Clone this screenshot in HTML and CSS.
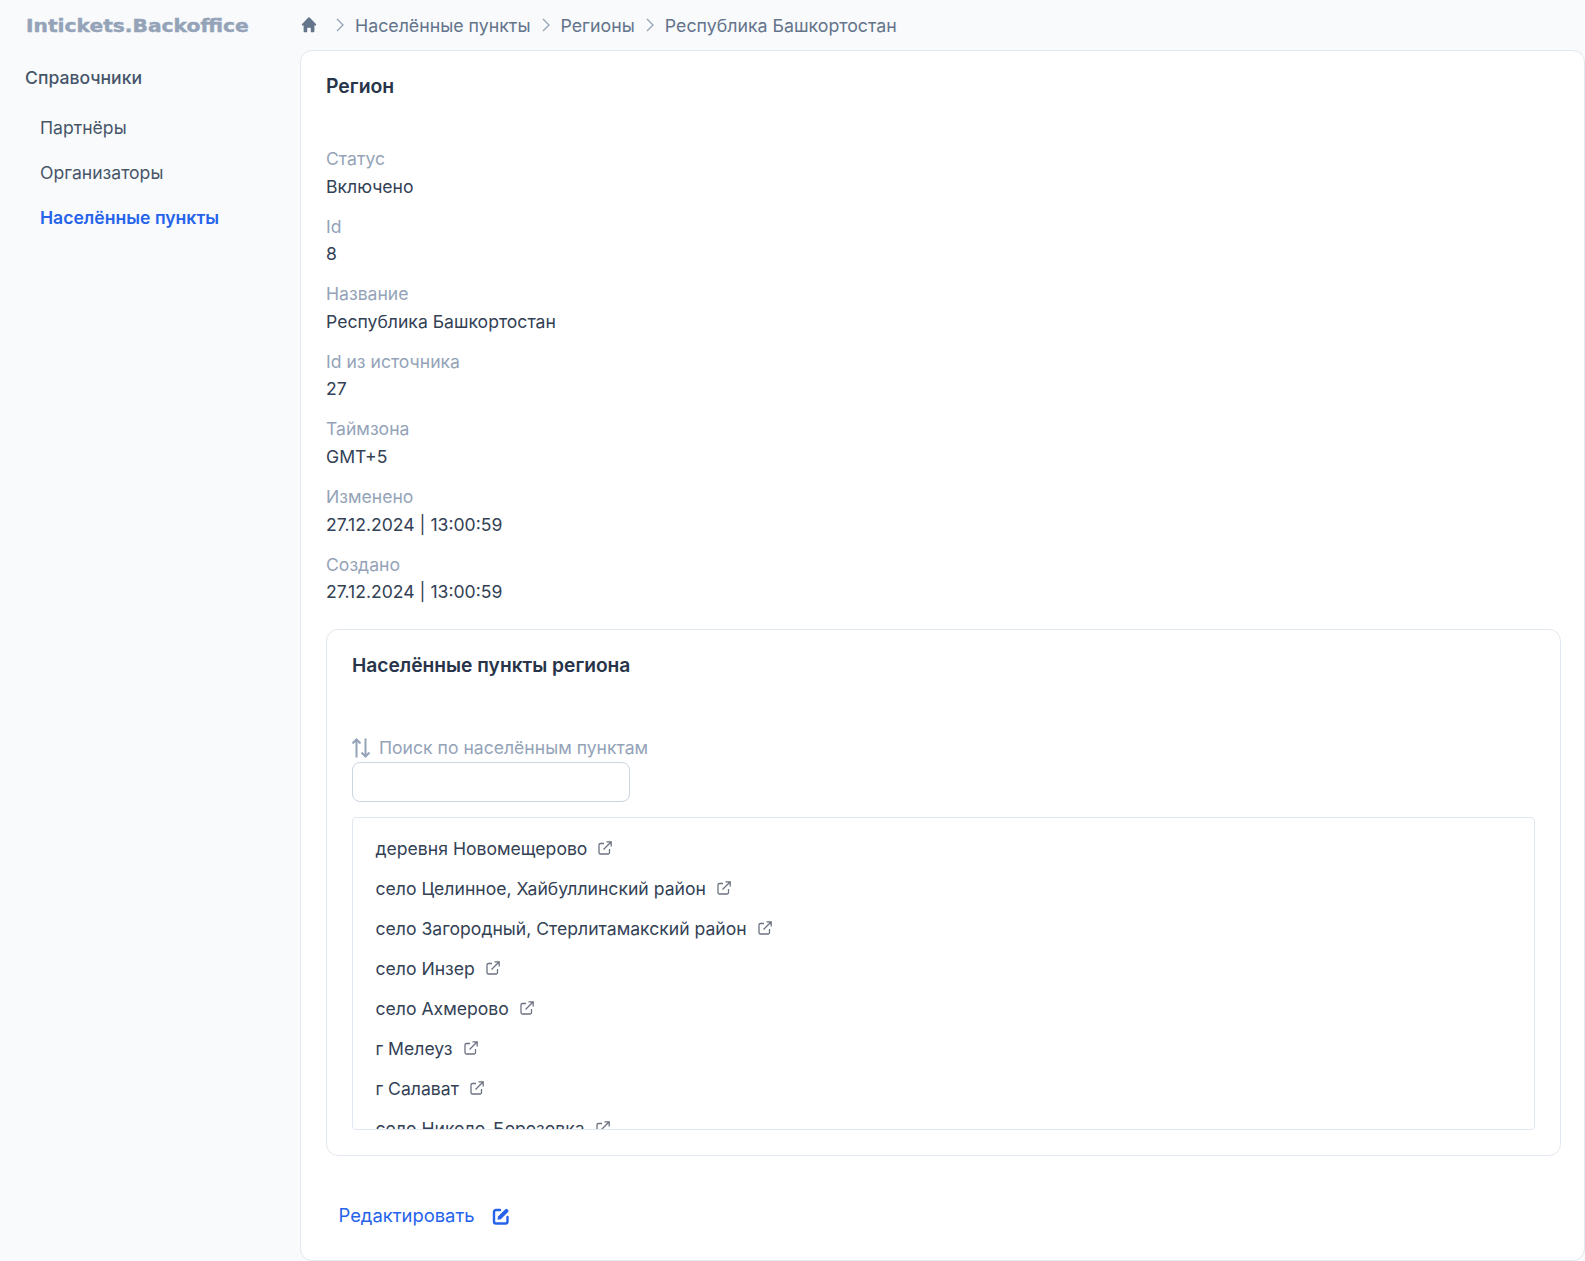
FILE: index.html
```html
<!DOCTYPE html>
<html lang="en">
<head>
    <meta charset="UTF-8">
    <title>Intickets.Backoffice</title>
    <link rel="stylesheet" href="styles.css">
</head>
<body>
    <div class="layout">
        <aside class="sidebar">
            <div class="logo">Intickets.Backoffice</div>
            <div class="nav-title">Справочники</div>
            <nav class="nav">
                <a class="nav-link">Партнёры</a>
                <a class="nav-link">Организаторы</a>
                <a class="nav-link active">Населённые пункты</a>
            </nav>
        </aside>
        <div class="main">
            <div class="breadcrumbs">
                <svg class="home-icon" viewBox="0 0 20 20" fill="currentColor"><path d="M9.3 1.8a1 1 0 0 1 1.4 0l7 7a1 1 0 0 1-.7 1.7h-1v6.5a1 1 0 0 1-1 1h-2.5a.5.5 0 0 1-.5-.5v-4a.5.5 0 0 0-.5-.5h-3a.5.5 0 0 0-.5.5v4a.5.5 0 0 1-.5.5H5a1 1 0 0 1-1-1v-6.5H3a1 1 0 0 1-.7-1.7z"/></svg>
                <svg class="crumb-sep" viewBox="0 0 10 16" fill="none" stroke="currentColor" stroke-width="1.3"><path d="M2 2l6 6-6 6"/></svg>
                <a class="crumb">Населённые пункты</a>
                <svg class="crumb-sep" viewBox="0 0 10 16" fill="none" stroke="currentColor" stroke-width="1.3"><path d="M2 2l6 6-6 6"/></svg>
                <a class="crumb">Регионы</a>
                <svg class="crumb-sep" viewBox="0 0 10 16" fill="none" stroke="currentColor" stroke-width="1.3"><path d="M2 2l6 6-6 6"/></svg>
                <a class="crumb">Республика Башкортостан</a>
            </div>
            <div class="card">
                <h2 class="card-title">Регион</h2>
                <dl class="fields">
                    <div class="field"><dt>Статус</dt><dd>Включено</dd></div>
                    <div class="field"><dt>Id</dt><dd>8</dd></div>
                    <div class="field"><dt>Название</dt><dd>Республика Башкортостан</dd></div>
                    <div class="field"><dt>Id из источника</dt><dd>27</dd></div>
                    <div class="field"><dt>Таймзона</dt><dd>GMT+5</dd></div>
                    <div class="field"><dt>Изменено</dt><dd>27.12.2024 | 13:00:59</dd></div>
                    <div class="field"><dt>Создано</dt><dd>27.12.2024 | 13:00:59</dd></div>
                </dl>
                <section class="panel">
                    <h3 class="panel-title">Населённые пункты региона</h3>
                    <label class="search-label">
                        <svg class="sort-icon" viewBox="0 0 20 20" fill="none" stroke="currentColor" stroke-width="2"><path d="M5.500 19.500V1.500M1.500 5.500l4-4 4 4M14.500 .5v18M10.500 14.500l4 4 4-4"/></svg>
                        Поиск по населённым пунктам
                    </label>
                    <input class="search-input" type="text">
                    <ul class="city-list">
                        <li><a>деревня Новомещерово</a><svg class="ext-icon" viewBox="0 0 16 16"><use href="#ext"/></svg></li>
                        <li><a>село Целинное, Хайбуллинский район</a><svg class="ext-icon" viewBox="0 0 16 16"><use href="#ext"/></svg></li>
                        <li><a>село Загородный, Стерлитамакский район</a><svg class="ext-icon" viewBox="0 0 16 16"><use href="#ext"/></svg></li>
                        <li><a>село Инзер</a><svg class="ext-icon" viewBox="0 0 16 16"><use href="#ext"/></svg></li>
                        <li><a>село Ахмерово</a><svg class="ext-icon" viewBox="0 0 16 16"><use href="#ext"/></svg></li>
                        <li><a>г Мелеуз</a><svg class="ext-icon" viewBox="0 0 16 16"><use href="#ext"/></svg></li>
                        <li><a>г Салават</a><svg class="ext-icon" viewBox="0 0 16 16"><use href="#ext"/></svg></li>
                        <li><a>село Николо-Березовка</a><svg class="ext-icon" viewBox="0 0 16 16"><use href="#ext"/></svg></li>
                    </ul>
                </section>
                <a class="edit-link">
                    Редактировать
                    <svg class="edit-icon" viewBox="0 0 18 18" fill="none"><path d="M8 3H4a2 2 0 0 0-2 2v9.500a2 2 0 0 0 2 2h9.500a2 2 0 0 0 2-2V10" stroke="currentColor" stroke-width="2.400" stroke-linecap="round"/><path d="M6 9.500 13.300 2.200a1.500 1.500 0 0 1 2.100 0l.7.7a1.500 1.500 0 0 1 0 2.100l-7.300 7.300-3.300.5z" fill="currentColor"/></svg>
                </a>
            </div>
        </div>
    </div>
    <svg class="defs" width="0" height="0">
        <symbol id="ext" viewBox="0 0 16 16"><path d="M7 3.500H3.500A1.500 1.500 0 0 0 2 5v7.500A1.500 1.500 0 0 0 3.500 14H11a1.500 1.500 0 0 0 1.500-1.500V9M6.500 9.500 14 2M9.500 1.800H14.200V6.500" fill="none" stroke="currentColor" stroke-width="1.300"/></symbol>
    </svg>
</body>
</html>
```

FILE: styles.css
```css
* {
    box-sizing: border-box;
}
body {
    margin: 0;
    font-family: Inter, "Liberation Sans", sans-serif;
    font-size: 17.6px;
    line-height: 27px;
    color: #334155;
    background-color: #f8fafc;
    height: 1261px;
    overflow: hidden;
}
.layout {
    display: flex;
    height: 100%;
}
.sidebar {
    width: 300px;
    flex-shrink: 0;
}
.logo {
    margin: 15px 0 0 26px;
    font-family: "DejaVu Sans", sans-serif;
    font-size: 17px;
    font-weight: 700;
    line-height: 22px;
    color: #94a3b8;
    -webkit-text-stroke: 0.4px #94a3b8;
    transform: scaleX(1.19);
    transform-origin: left center;
}
.nav-title {
    margin: 27px 0 0 25px;
    font-weight: 500;
    color: #475569;
}
.nav {
    display: flex;
    flex-direction: column;
    gap: 18px;
    margin: 23px 0 0 40px;
}
.nav-link {
    color: #475569;
}
.nav-link.active {
    color: #2563eb;
    font-weight: 600;
}
.main {
    flex: 1;
    min-width: 0;
    display: flex;
    flex-direction: column;
}
.breadcrumbs {
    height: 50px;
    display: flex;
    align-items: center;
    font-size: 17.750px;
    color: #64748b;
}
.home-icon {
    width: 18px;
    height: 18px;
    color: #64748b;
}
.crumb-sep {
    width: 10px;
    height: 16px;
    margin: 0 10px;
    color: #94a3b8;
}
.home-icon + .crumb-sep {
    margin: 0 10px 0 17px;
}
.card {
    flex: 1;
    background-color: white;
    border: 1px solid #e2e8f0;
    border-radius: 12px;
    padding: 21px 23px 21px 25px;
}
.card-title {
    margin: 0;
    font-size: 19.4px;
    line-height: 28px;
    font-weight: 600;
    color: #273449;
}
.fields {
    margin: 45px 0 0;
    display: flex;
    flex-direction: column;
    gap: 13px;
}
.field dt {
    color: #94a3b8;
}
.field dd {
    margin: 0.600px 0 0;
    color: #334155;
}
.panel {
    margin-top: 24px;
    height: 527px;
    border: 1px solid #e2e8f0;
    border-radius: 12px;
    padding: 21px 25px 25px;
    display: flex;
    flex-direction: column;
}
.panel-title {
    margin: 0;
    font-size: 19.2px;
    line-height: 28px;
    font-weight: 600;
    color: #273449;
}
.search-label {
    margin-top: 55px;
    display: flex;
    align-items: center;
    gap: 7px;
    color: #94a3b8;
}
.sort-icon {
    width: 20px;
    height: 20px;
    margin-left: -1px;
    margin-right: 1px;
}
.search-input {
    width: 278px;
    height: 40px;
    margin-top: 1px;
    border: 1px solid #cbd5e1;
    border-radius: 8px;
    background-color: white;
    outline: none;
}
.city-list {
    list-style: none;
    margin: 15px 0 0;
    padding: 17px 23px 0 22.500px;
    flex: 1;
    min-height: 0;
    overflow: hidden;
    border: 1px solid #e2e8f0;
    border-radius: 4px;
    display: flex;
    flex-direction: column;
    gap: 13px;
}
.city-list li {
    display: flex;
    align-items: center;
    gap: 10px;
    flex-shrink: 0;
}
.ext-icon {
    width: 16px;
    height: 16px;
    color: #6b7280;
    margin-top: -2px;
}
.defs {
    position: absolute;
}
.edit-link {
    margin: 46px 0 0 12.500px;
    display: inline-flex;
    align-items: center;
    gap: 17px;
    font-size: 18.400px;
    color: #2563eb;
}
.edit-icon {
    width: 18px;
    height: 18px;
}
```
